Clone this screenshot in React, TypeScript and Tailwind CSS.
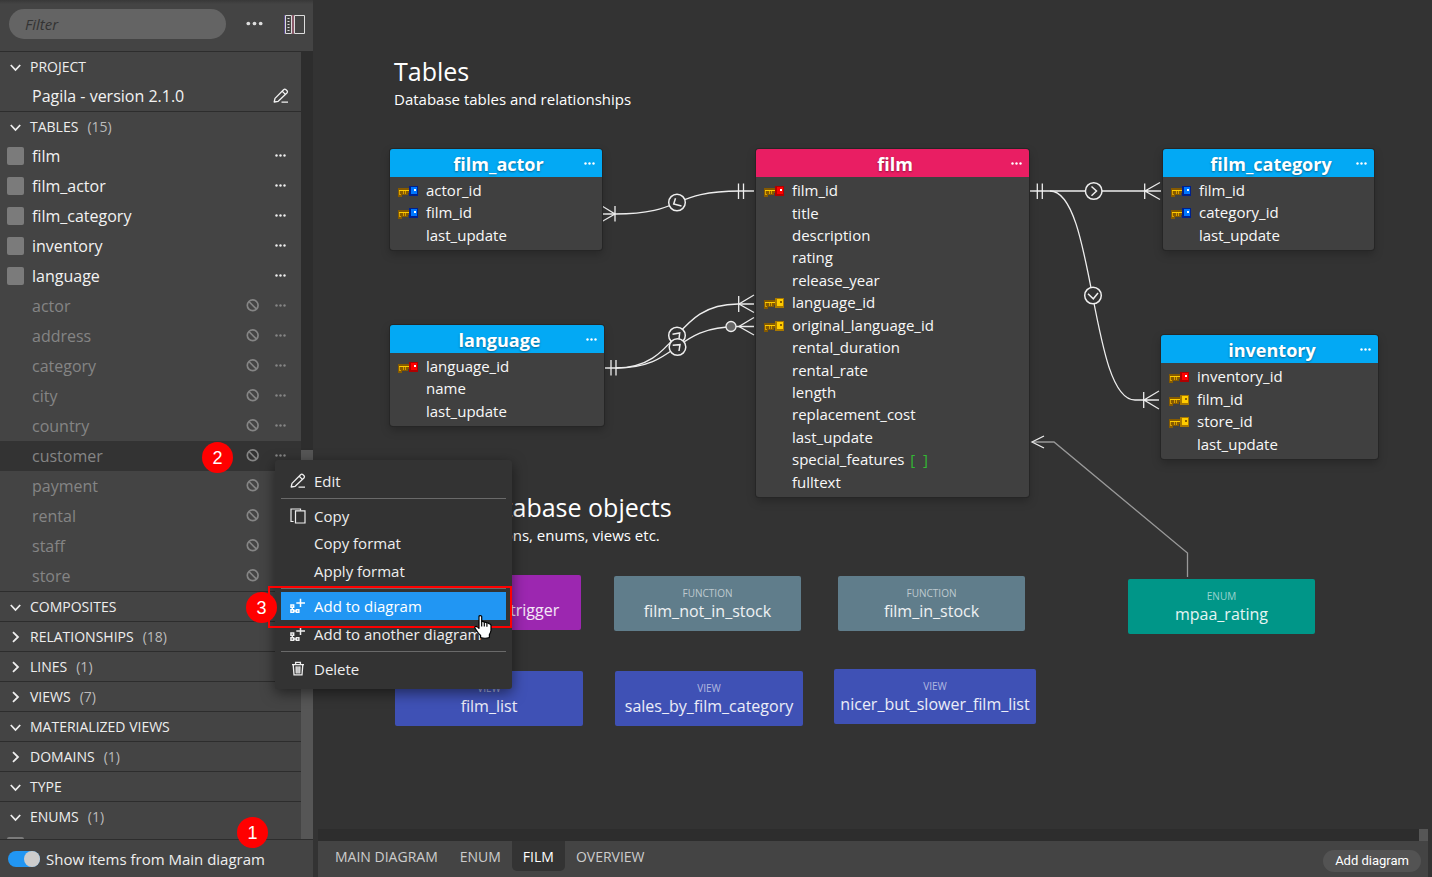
import React from "react";

type KeyKind = "primary" | "foreign" | "both";
type Column = { name: string; keyKind?: KeyKind; array?: boolean };
type Entity = { title: string; place: string; header: string; rows: string; columns: Column[] };
type Box = { kind: string; name: string; place: string };

const FONT = "font-['Open_Sans','Noto_Sans',sans-serif]";

const ENTITIES: Entity[] = [
  {
    title: "film_actor",
    place: "left-[72px] top-[149px] w-[212px]",
    header: "bg-[#03a9f4]",
    rows: "h-[67px]",
    columns: [{ name: "actor_id", keyKind: "both" }, { name: "film_id", keyKind: "both" }, { name: "last_update" }],
  },
  {
    title: "language",
    place: "left-[72px] top-[325px] w-[214px]",
    header: "bg-[#03a9f4]",
    rows: "h-[67px]",
    columns: [{ name: "language_id", keyKind: "primary" }, { name: "name" }, { name: "last_update" }],
  },
  {
    title: "film",
    place: "left-[438px] top-[149px] w-[273px]",
    header: "bg-[#e91e63]",
    rows: "h-[314px]",
    columns: [
      { name: "film_id", keyKind: "primary" },
      { name: "title" },
      { name: "description" },
      { name: "rating" },
      { name: "release_year" },
      { name: "language_id", keyKind: "foreign" },
      { name: "original_language_id", keyKind: "foreign" },
      { name: "rental_duration" },
      { name: "rental_rate" },
      { name: "length" },
      { name: "replacement_cost" },
      { name: "last_update" },
      { name: "special_features", array: true },
      { name: "fulltext" },
    ],
  },
  {
    title: "film_category",
    place: "left-[845px] top-[149px] w-[211px]",
    header: "bg-[#03a9f4]",
    rows: "h-[67px]",
    columns: [{ name: "film_id", keyKind: "both" }, { name: "category_id", keyKind: "both" }, { name: "last_update" }],
  },
  {
    title: "inventory",
    place: "left-[843px] top-[335px] w-[217px]",
    header: "bg-[#03a9f4]",
    rows: "h-[90px]",
    columns: [
      { name: "inventory_id", keyKind: "primary" },
      { name: "film_id", keyKind: "foreign" },
      { name: "store_id", keyKind: "foreign" },
      { name: "last_update" },
    ],
  },
];

const BOXES: Box[] = [
  { kind: "TRIGGER", name: "film_fulltext_trigger", place: "left-[76px] top-[575px] w-[187px] bg-[#9c27b0]" },
  { kind: "FUNCTION", name: "film_not_in_stock", place: "left-[296px] top-[576px] w-[187px] bg-[#607d8b]" },
  { kind: "FUNCTION", name: "film_in_stock", place: "left-[520px] top-[576px] w-[187px] bg-[#607d8b]" },
  { kind: "ENUM", name: "mpaa_rating", place: "left-[810px] top-[579px] w-[187px] bg-[#009688]" },
  { kind: "VIEW", name: "film_list", place: "left-[77px] top-[671px] w-[188px] bg-[#3f51b5]" },
  { kind: "VIEW", name: "sales_by_film_category", place: "left-[297px] top-[671px] w-[188px] bg-[#3f51b5]" },
  { kind: "VIEW", name: "nicer_but_slower_film_list", place: "left-[516px] top-[669px] w-[202px] bg-[#3f51b5]" },
];

const SHOWN = ["film", "film_actor", "film_category", "inventory", "language"];
const HIDDEN = ["actor", "address", "category", "city", "country", "customer", "payment", "rental", "staff", "store"];
const TABS = ["MAIN DIAGRAM", "ENUM", "FILM", "OVERVIEW"];

const KEY_COLORS: Record<KeyKind, [string, string, string]> = {
  primary: ["#b00000", "#ff0000", "#ffffff"],
  both: ["#00208c", "#0078ff", "#ffffff"],
  foreign: ["#a87800", "#ffcc00", "#8a6000"],
};

function KeyIcon({ kind }: { kind: KeyKind }) {
  const [edge, fill, hole] = KEY_COLORS[kind];
  return (
    <svg viewBox="0 0 20 11" className="h-[11px] w-5" shapeRendering="crispEdges" aria-hidden="true">
      <path d="M0 2H12V7H10V9H4V11H0Z" fill="#855a00" />
      <path d="M1 4H12V5H1Z" fill="#ffcc00" />
      <path d="M1 5H2V9H1ZM2 8H3V9H2ZM5 5H6V8H5ZM7 5H8V8H7Z" fill="#d79e00" />
      <path d="M11 0H20V10H11Z" fill={edge} />
      <path d="M13 1H19V8H13Z" fill={fill} />
      <path d="M16 3H18V5H16Z" fill={hole} />
    </svg>
  );
}

function Dots({ className }: { className: string }) {
  return (
    <svg viewBox="0 0 11 3" className={className} fill="currentColor" aria-hidden="true">
      <circle cx="1.5" cy="1.5" r="1.2" />
      <circle cx="5.5" cy="1.5" r="1.2" />
      <circle cx="9.5" cy="1.5" r="1.2" />
    </svg>
  );
}

function Chevron({ open }: { open: boolean }) {
  return (
    <svg viewBox="0 0 12 12" className="h-3 w-3 shrink-0" fill="none" stroke="#eee" strokeWidth="1.8" aria-hidden="true">
      <path d={open ? "M0.8 4L5.5 9L10.2 4" : "M3 1.2L8 6L3 10.8"} />
    </svg>
  );
}

function PencilIcon() {
  return (
    <svg viewBox="0 0 16 16" className="h-4 w-4" fill="none" stroke="currentColor" strokeWidth="1.3" strokeLinejoin="round" aria-hidden="true">
      <path d="M1.2 14L2 10.4L10.6 1.7Q11.8 0.7 13 1.7L14 2.7Q14.9 3.9 13.9 5L5.2 13.3Z" />
      <path d="M9.2 3.2L12.4 6.4M8.5 14.2H15" />
    </svg>
  );
}

function CopyIcon() {
  return (
    <svg viewBox="0 0 16 16" className="h-4 w-4" fill="none" stroke="currentColor" strokeWidth="1.2" aria-hidden="true">
      <path d="M5.5 2.8H15V15H5.5Z" />
      <path d="M3.6 13.5H1V1H10.5V2.6" />
    </svg>
  );
}

function AddIcon() {
  return (
    <svg viewBox="0 0 16 16" className="h-4 w-4" fill="none" stroke="currentColor" strokeWidth="1.4" aria-hidden="true">
      <path d="M10.5 0.8V9M6.3 4.9H15" strokeWidth="1.5" />
      <path d="M0.9 7H3.7V9.3H0.9ZM0.9 11.7H3.7V14.2H0.9ZM6.3 11.7H8.9V14.2H6.3Z" />
      <path d="M2.3 9.3V11.7M3.7 13H6.3" />
    </svg>
  );
}

function TrashIcon() {
  return (
    <svg viewBox="0 0 16 16" className="h-4 w-4" fill="none" stroke="currentColor" strokeWidth="1.3" aria-hidden="true">
      <path d="M2 3.6H14M5.6 3.4V1.4H10.4V3.4M3.2 3.6L4 13.8H12L12.8 3.6" />
      <path d="M5.4 5.4H10.6L10.2 12.4H5.8Z" fill="currentColor" fillOpacity="0.6" stroke="none" />
      <path d="M6.2 5.4V12.4M8 5.4V12.4M9.8 5.4V12.4" strokeWidth="0.9" />
    </svg>
  );
}

function BanIcon() {
  return (
    <svg viewBox="0 0 14 14" className="h-[14px] w-[14px]" fill="none" stroke="currentColor" strokeWidth="1.7" aria-hidden="true">
      <circle cx="6.7" cy="6.3" r="5.4" />
      <path d="M2.9 2.5L10.5 10.1" />
    </svg>
  );
}

function Section({ title, count, open, children }: { title: string; count?: number; open: boolean; children?: React.ReactNode }) {
  return (
    <section className="border-t border-[#2d2d2d]">
      <button type="button" aria-expanded={open} className="flex h-[29px] w-full items-center gap-2 pt-px pl-[10px] text-left text-sm text-[#eee]">
        <Chevron open={open} />
        <span>
          {title}
          {count !== undefined && <span className="pl-[9px] text-[#bbb]">({count})</span>}
        </span>
      </button>
      {children}
    </section>
  );
}

function ItemCheckbox({ label }: { label?: string }) {
  return <input type="checkbox" aria-label={label} className="h-[18px] w-[17px] appearance-none rounded-[2px] bg-[#7b7b7b]" />;
}

function ShownRow({ name }: { name: string }) {
  return (
    <div className="flex h-[30px] items-center justify-between pr-[15px] pl-[7px]">
      <label className="flex items-center gap-2 text-base text-[#f2f2f2]">
        <ItemCheckbox />
        {name}
      </label>
      <button type="button" aria-label={name + " actions"} className="pb-px text-[#eee]">
        <Dots className="h-[3px] w-[11px]" />
      </button>
    </div>
  );
}

function HiddenRow({ name, active }: { name: string; active: boolean }) {
  return (
    <div className={"flex h-[30px] items-center justify-between pr-[15px] pl-8 text-[#858585] " + (active ? "bg-[#333]" : "")}>
      <span className="text-base">{name}</span>
      <span className="flex items-center gap-[15px]">
        <BanIcon />
        <button type="button" aria-label={name + " actions"} className="pb-px">
          <Dots className="h-[3px] w-[11px]" />
        </button>
      </span>
    </div>
  );
}

function Sidebar() {
  return (
    <aside className="flex w-[313px] shrink-0 flex-col bg-[#444]">
      <div className="flex h-[51px] shrink-0 items-center bg-linear-to-b from-[#383838] from-0% to-[#444] to-8% pr-[7px] pb-[3px] pl-[9px]">
        <input
          aria-label="Filter"
          placeholder="Filter"
          className="h-[30px] w-[217px] rounded-full bg-[#646464] px-4 text-[15px] italic outline-none placeholder:text-[#333]"
        />
        <button type="button" aria-label="More" className="ml-5 pb-[2px] text-[#ddd]">
          <Dots className="h-[5px] w-[17px]" />
        </button>
        <button type="button" aria-label="Toggle panel layout" className="ml-auto pt-px">
          <svg viewBox="0 0 22 20" className="h-5 w-[22px]" fill="none" stroke="#ddd" aria-hidden="true">
            <path d="M1.5 0.5H7.5V18.5H1.5ZM10.5 0.5H20.5V18.5H10.5Z" />
            <path d="M4.5 3V17" strokeWidth="2" strokeDasharray="1 2" />
            <path d="M0.5 0V19" stroke="#5a4c92" />
            <path d="M8.5 0V19M9.5 0V19" stroke="#8a5a6a" />
          </svg>
        </button>
      </div>
      <div className="flex min-h-0 flex-1">
        <div className="min-w-0 flex-1 overflow-hidden">
          <Section title="PROJECT" open>
            <div className="flex h-[30px] items-center justify-between pr-3 pl-8 text-base text-[#f2f2f2]">
              Pagila - version 2.1.0
              <button type="button" aria-label="Edit project">
                <PencilIcon />
              </button>
            </div>
          </Section>
          <Section title="TABLES" count={15} open>
            {SHOWN.map((n) => (
              <ShownRow key={n} name={n} />
            ))}
            {HIDDEN.map((n) => (
              <HiddenRow key={n} name={n} active={n === "customer"} />
            ))}
          </Section>
          <Section title="COMPOSITES" open />
          <Section title="RELATIONSHIPS" count={18} open={false} />
          <Section title="LINES" count={1} open={false} />
          <Section title="VIEWS" count={7} open={false} />
          <Section title="MATERIALIZED VIEWS" open />
          <Section title="DOMAINS" count={1} open={false} />
          <Section title="TYPE" open />
          <Section title="ENUMS" count={1} open>
            <div className="flex h-[30px] items-center pl-[7px]">
              <ItemCheckbox label="mpaa_rating" />
            </div>
          </Section>
        </div>
        <div className="flex w-3 flex-col justify-end border-t border-[#2d2d2d] bg-[#2d2d2d]">
          <div className="h-[389px] bg-[#565656]" />
        </div>
      </div>
      <label className="flex h-[38px] shrink-0 items-center gap-[6px] border-t border-[#2d2d2d] pt-px pl-2 text-[15px] text-[#eee]">
        <input
          type="checkbox"
          role="switch"
          defaultChecked
          className="flex h-4 w-8 appearance-none items-center justify-end rounded-full bg-[#2196f3] before:h-4 before:w-4 before:rounded-full before:bg-[#ccc]"
        />
        Show items from Main diagram
      </label>
    </aside>
  );
}

function Relations() {
  return (
    <svg className="absolute top-0 left-0 h-[740px] w-[1110px]" viewBox="318 0 1110 740" fill="none" stroke="#eee" strokeWidth="1.3" aria-hidden="true">
      <path d="M602 214H615C685 214 670 191 740 191H754" />
      <path d="M602 206L615 214L602 221.5M615 206V221.5M738.5 183.5V199M743.5 183.5V199" />
      <path d="M604 368H616C680 368 672 304 738 304H754M611 360V375.5M616 360V375.5" />
      <path d="M616 368C680 368 672 326.5 738 326.5H754" />
      <path d="M738.7 296V312M754 295L739 304L754 312.5M754 317.5L739 326.5L754 335" />
      <circle cx="731" cy="326.5" r="5" fill="#666" />
      <path d="M1029 191H1161M1037.3 183.5V199M1042.3 183.5V199M1144.7 183.5V199M1160 182.5L1145 191L1160 199.5" />
      <path d="M1050 191C1095 191 1090 400 1135 400H1159M1143.7 392V408M1159 391L1144 400L1159 409" />
      <path d="M1032 442H1054L1187.5 553V577" stroke="#999" />
      <path d="M1044 436L1032 442L1044 448" />
      <g fill="#333" strokeWidth="1.5">
        <circle cx="677" cy="202.5" r="8.3" />
        <path d="M675.5 198.2L673.7 204L681.5 206" fill="none" />
        <circle cx="677" cy="335.5" r="8.3" />
        <path d="M672.5 334.3L679.7 333L679 339" fill="none" />
        <circle cx="677.5" cy="347" r="8.3" />
        <path d="M672.7 345.3L680 344.7L679 351" fill="none" />
        <circle cx="1093.7" cy="191" r="8.3" />
        <path d="M1091.5 186.5L1096.5 191L1091.5 195.8" fill="none" />
        <circle cx="1093" cy="295.5" r="8.3" />
        <path d="M1088 293.7L1093.3 298.8L1098 293" fill="none" />
      </g>
    </svg>
  );
}

function EntityNode({ entity }: { entity: Entity }) {
  return (
    <div className={"absolute rounded-[3px] bg-[#404040] pb-1 shadow-[0_0_0_1px_#262626,0_4px_10px_rgba(0,0,0,0.25)] " + entity.place}>
      <div className={"relative flex h-7 items-center justify-center rounded-t-[3px] pt-[2px] pl-[5px] " + entity.header}>
        <h2 className="text-lg leading-6 font-bold text-white [text-shadow:0_1px_2px_rgba(0,0,0,0.4)]">{entity.title}</h2>
        <button type="button" aria-label={entity.title + " menu"} className="absolute top-[13px] right-[7px] text-white">
          <Dots className="h-[3px] w-[11px]" />
        </button>
      </div>
      <ul className={"mt-[2px] grid auto-rows-fr text-[15px] leading-[22px] text-[#f8f8f8] " + entity.rows}>
        {entity.columns.map((c) => (
          <li key={c.name} className="flex items-center pl-2">
            <span className="flex w-7 items-center pt-[3px]">{c.keyKind && <KeyIcon kind={c.keyKind} />}</span>
            <span>
              {c.name}
              {c.array && <span className="pl-[2px] whitespace-pre text-[#33b833]"> [  ]</span>}
            </span>
          </li>
        ))}
      </ul>
    </div>
  );
}

function Caption({ title, text, place }: { title: string; text: string; place: string }) {
  return (
    <div className={"absolute text-white " + place}>
      <h1 className="text-[25px] leading-[34px]">{title}</h1>
      <p className="text-[15px] leading-[22px]">{text}</p>
    </div>
  );
}

function Canvas() {
  return (
    <div className="relative min-h-0 flex-1 overflow-hidden">
      <Caption title="Tables" text="Database tables and relationships" place="top-[54px] left-[76px]" />
      <Caption title="Other database objects" text="Triggers, functions, enums, views etc." place="top-[490px] left-[82px]" />
      <Relations />
      {ENTITIES.map((e) => (
        <EntityNode key={e.title} entity={e} />
      ))}
      {BOXES.map((b) => (
        <div key={b.name} className={"absolute flex h-[55px] flex-col items-center rounded-[2px] pt-[10px] text-center whitespace-nowrap " + b.place}>
          <span className="text-[10px] leading-[14px] text-white/60">{b.kind}</span>
          <span className="text-base leading-[22px] text-white/90">{b.name}</span>
        </div>
      ))}
    </div>
  );
}

function MenuItem({ label, icon, active }: { label: string; icon?: React.ReactNode; active?: boolean }) {
  return (
    <button
      type="button"
      role="menuitem"
      className={"flex h-7 w-full items-center gap-2 pl-[9px] text-left text-[15px] " + (active ? "bg-[#2196f3] text-white" : "text-[#eee]")}
    >
      <span className="flex w-4">{icon}</span>
      {label}
    </button>
  );
}

function MenuLine() {
  return <hr className="my-[3px] border-t border-[#6a6a6a]" />;
}

function ContextMenu() {
  return (
    <div role="menu" className="absolute top-[460px] left-[275px] w-[237px] rounded-[3px] bg-[#333] px-[6px] pt-[7px] pb-[6px] shadow-[0_4px_14px_rgba(0,0,0,0.5)]">
      <MenuItem label="Edit" icon={<PencilIcon />} />
      <MenuLine />
      <div className="grid h-[83px] auto-rows-fr items-center">
        <MenuItem label="Copy" icon={<CopyIcon />} />
        <MenuItem label="Copy format" />
        <MenuItem label="Apply format" />
      </div>
      <MenuLine />
      <MenuItem label="Add to diagram" icon={<AddIcon />} active />
      <MenuItem label="Add to another diagram" icon={<AddIcon />} />
      <MenuLine />
      <MenuItem label="Delete" icon={<TrashIcon />} />
    </div>
  );
}

function Step({ n, place }: { n: number; place: string }) {
  return (
    <span className={"absolute flex h-[31px] w-[31px] items-center justify-center rounded-full bg-[#f00] font-['Liberation_Sans',sans-serif] text-lg text-white " + place}>
      {n}
    </span>
  );
}

export default function App() {
  return (
    <div className={"relative flex h-screen w-full overflow-hidden bg-[#333] " + FONT}>
      <Sidebar />
      <main className="flex min-w-0 flex-1 flex-col pr-1 pl-[5px]">
        <Canvas />
        <div className="flex h-3 shrink-0 justify-end bg-[#2d2d2d]">
          <div className="w-[9px] bg-[#565656]" />
        </div>
        <footer className="flex h-9 shrink-0 items-start justify-between bg-[#444] pr-[7px] pl-[6px]">
          <nav className="flex">
            {TABS.map((t) => (
              <button
                key={t}
                type="button"
                className={"h-[30px] rounded-b-[5px] px-[11px] pt-[2px] text-sm " + (t === "FILM" ? "bg-[#333] text-white" : "text-[#ccc]")}
              >
                {t}
              </button>
            ))}
          </nav>
          <button type="button" className="mt-[9px] h-[22px] rounded-full bg-[#535353] px-3 font-[Roboto,sans-serif] text-[13px] text-white">
            Add diagram
          </button>
        </footer>
      </main>
      <ContextMenu />
      <div className="pointer-events-none absolute top-[586px] left-[268px] h-[42px] w-[244px] border-2 border-[#f00]" />
      <Step n={1} place="left-[237px] top-[817px]" />
      <Step n={2} place="left-[202px] top-[442px]" />
      <Step n={3} place="left-[246px] top-[592px]" />
      <svg viewBox="0 0 18 24" className="pointer-events-none absolute top-[615px] left-[474px] h-6 w-[18px]" fill="#fff" stroke="#000" strokeWidth="1.2" strokeLinejoin="round" aria-hidden="true">
        <path d="M5 1.6Q5 0.6 6.3 0.6Q7.7 0.6 7.7 1.6V6.6Q9 5.9 10.2 7.2Q11.6 6.6 12.8 8Q14 7.5 15 8.6Q17 8.8 17 10.5V15.5Q16.6 17.5 15.4 19.5V22.5Q11 24 6.6 22.5V20.5Q4 18 2.6 15.5L0.9 13Q0.5 11.4 2.2 11.4Q3.6 11.6 5 13.4Z" />
        <path d="M7.7 6.6V11.5M10.3 7.3V11.5M12.9 8.2V11.8" fill="none" />
      </svg>
    </div>
  );
}
